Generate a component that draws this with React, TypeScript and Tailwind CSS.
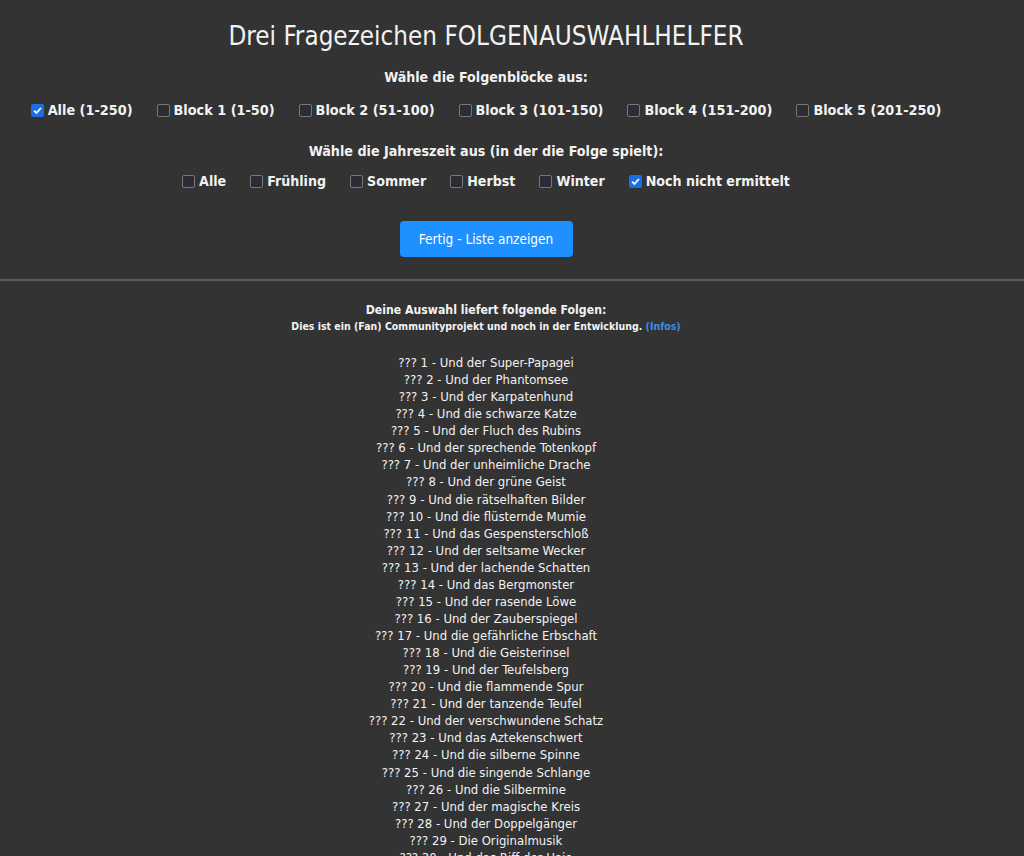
import React from "react";

const folgen: string[] = [
  "Und der Super-Papagei",
  "Und der Phantomsee",
  "Und der Karpatenhund",
  "Und die schwarze Katze",
  "Und der Fluch des Rubins",
  "Und der sprechende Totenkopf",
  "Und der unheimliche Drache",
  "Und der grüne Geist",
  "Und die rätselhaften Bilder",
  "Und die flüsternde Mumie",
  "Und das Gespensterschloß",
  "Und der seltsame Wecker",
  "Und der lachende Schatten",
  "Und das Bergmonster",
  "Und der rasende Löwe",
  "Und der Zauberspiegel",
  "Und die gefährliche Erbschaft",
  "Und die Geisterinsel",
  "Und der Teufelsberg",
  "Und die flammende Spur",
  "Und der tanzende Teufel",
  "Und der verschwundene Schatz",
  "Und das Aztekenschwert",
  "Und die silberne Spinne",
  "Und die singende Schlange",
  "Und die Silbermine",
  "Und der magische Kreis",
  "Und der Doppelgänger",
  "Die Originalmusik",
  "Und das Riff der Haie",
];

const bloecke = [
  { label: "Alle (1-250)", checked: true },
  { label: "Block 1 (1-50)", checked: false },
  { label: "Block 2 (51-100)", checked: false },
  { label: "Block 3 (101-150)", checked: false },
  { label: "Block 4 (151-200)", checked: false },
  { label: "Block 5 (201-250)", checked: false },
];

const jahreszeiten = [
  { label: "Alle", checked: false },
  { label: "Frühling", checked: false },
  { label: "Sommer", checked: false },
  { label: "Herbst", checked: false },
  { label: "Winter", checked: false },
  { label: "Noch nicht ermittelt", checked: true },
];

function Box({ checked }: { checked: boolean }) {
  if (checked) {
    return (
      <span className="w-[13px] h-[13px] rounded-[2px] bg-[#1a6fe6] flex items-center justify-center shrink-0">
        <svg width="11" height="11" viewBox="0 0 11 11">
          <path d="M2 5.6 L4.4 8 L9 3" fill="none" stroke="white" strokeWidth="1.8" />
        </svg>
      </span>
    );
  }
  return <span className="w-[13px] h-[13px] rounded-[2px] border border-[#777] bg-[#2c2c36] shrink-0" />;
}

function Option({ label, checked }: { label: string; checked: boolean }) {
  return (
    <label className="inline-flex items-center gap-[4px] mx-[12px]">
      <Box checked={checked} />
      <span className="font-bold">{label}</span>
    </label>
  );
}

export default function App() {
  const [blocks] = React.useState(bloecke);
  const [seasons] = React.useState(jahreszeiten);

  return (
    <div className="min-h-screen bg-[#333333] text-[#f2f2f2] font-['DejaVu_Sans_Condensed','DejaVu_Sans',sans-serif]">
      <div className="w-[972px] text-center">
        <h1 className="pt-[20px] text-[25.8px] leading-[32px]">Drei Fragezeichen FOLGENAUSWAHLHELFER</h1>
        <div className="mt-[16px] text-[14.1px] font-bold leading-[18px]">Wähle die Folgenblöcke aus:</div>
        <div className="mt-[15px] flex justify-center text-[14.3px] leading-[18px]">
          {blocks.map((b) => (
            <Option key={b.label} label={b.label} checked={b.checked} />
          ))}
        </div>
        <div className="mt-[23px] text-[14.2px] font-bold leading-[18px]">
          Wähle die Jahreszeit aus (in der die Folge spielt):
        </div>
        <div className="mt-[12px] flex justify-center text-[14.1px] leading-[18px]">
          {seasons.map((s) => (
            <Option key={s.label} label={s.label} checked={s.checked} />
          ))}
        </div>
        <div className="mt-[31px] flex justify-center">
          <button className="w-[173px] h-[36px] rounded-[4px] bg-[#1e90ff] text-white text-[13.5px]">
            Fertig - Liste anzeigen
          </button>
        </div>
      </div>
      <hr className="mt-[22px] border-0 h-[2px] bg-[#5a5a5a]" />
      <div className="w-[972px] text-center">
        <div className="mt-[21px] text-[12.2px] font-bold leading-[16px]">Deine Auswahl liefert folgende Folgen:</div>
        <div className="text-[10.5px] font-bold leading-[16px]">
          Dies ist ein (Fan) Communityprojekt und noch in der Entwicklung.{" "}
          <span className="text-[#3b8fe0]">(Infos)</span>
        </div>
        <div className="mt-[20px] text-[13px] leading-[17.07px]">
          {folgen.map((f, i) => (
            <div key={i}>
              ??? {i + 1} - {f}
            </div>
          ))}
        </div>
      </div>
    </div>
  );
}
